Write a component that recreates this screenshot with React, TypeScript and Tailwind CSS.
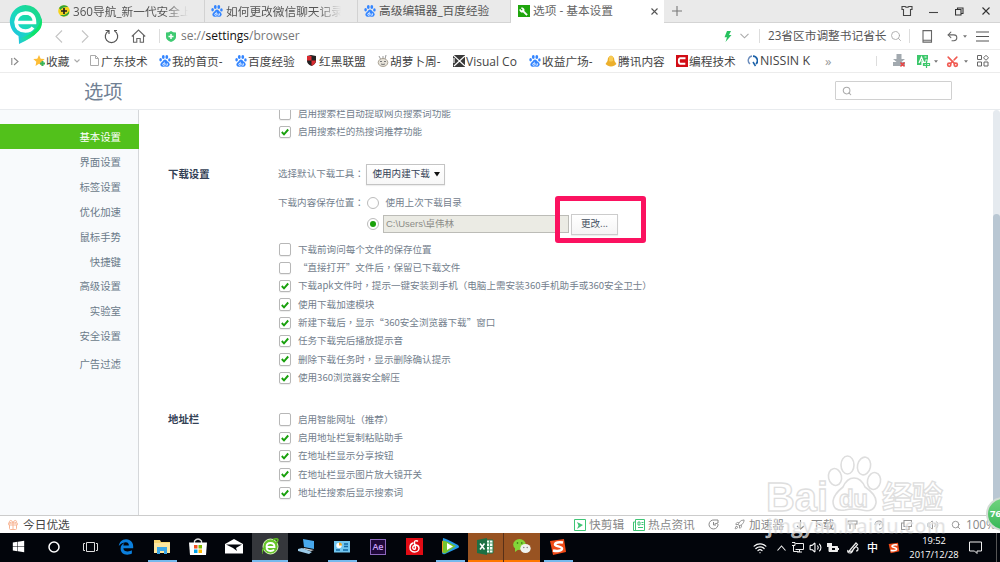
import React from "react";
import { Gift, Scissors, Search, Undo2, Wifi, Volume2, Rocket, Wrench } from "lucide-react";
import { FaEdgeLegacy, FaWindows } from "react-icons/fa6";

type Kids = { children?: React.ReactNode };

function Paw() {
  return (
    <svg width="12" height="12" viewBox="0 0 12 12" className="shrink-0" fill="#3385ff">
      <ellipse cx="4.300" cy="2" rx="1.400" ry="1.900" />
      <ellipse cx="7.800" cy="2" rx="1.400" ry="1.900" />
      <ellipse cx="1.600" cy="4.700" rx="1.300" ry="1.700" />
      <ellipse cx="10.400" cy="4.900" rx="1.300" ry="1.700" />
      <path d="M6 4.500q1.500 0 2.300 1.800Q11 8 10.700 9.800 10 12.200 7.800 11.700q-1.800-.4-3.600 0Q1.800 12.200 1.300 9.800 1.200 8 3.700 6.300 4.500 4.500 6 4.500z" />
      <path d="M5.300 6.800v3.500H4q-.8-.9 0-1.800h1.300M6.800 8.300v1.900h1.700V8.300" fill="none" stroke="#fff" strokeWidth=".7" />
    </svg>
  );
}

function Caret() {
  return <svg width="4" height="3" viewBox="0 0 4 3" className="shrink-0"><path d="M0 .3h4L2 2.7z" fill="#777" /></svg>;
}

function Chevron({ d, w = 9, h = 6, c = "#aaa" }: { d: string; w?: number; h?: number; c?: string }) {
  return <svg width={w} height={h} viewBox={`0 0 ${w} ${h}`} className="shrink-0"><path d={d} fill="none" stroke={c} strokeWidth="1.1" /></svg>;
}

function SogouIcon({ size }: { size: number }) {
  return (
    <svg width={size} height={size} viewBox="0 0 18 18">
      <path d="M1 3 15 1l2 13-13 3z" fill="#f04a17" />
      <path d="M14 4.500c-4-.8-8 0-8 2s7 1.700 7 4c0 2.500-5 3-9 2" fill="none" stroke="#fff" strokeWidth="2.500" />
    </svg>
  );
}

function Tab({ icon, children, faded }: Kids & { icon: React.ReactNode; faded?: boolean }) {
  return (
    <div className="flex h-[22px] w-[153px] shrink-0 items-center border-r border-[#d2d2d2] pl-[6px]">
      <span className="flex w-[15px] shrink-0">{icon}</span>
      <span className={faded ? "w-[115px] overflow-hidden leading-[16px] whitespace-nowrap [mask-image:linear-gradient(to_right,black_80%,transparent)]" : "whitespace-nowrap"}>{children}</span>
    </div>
  );
}

function TabBar() {
  return (
    <div className="flex h-[23px] shrink-0 items-center border-b border-[#d4d4d4] bg-[#eaeaea] pl-[52px] text-[11.700px] text-[#555]">
      <Tab faded icon={
        <svg width="12" height="12" viewBox="0 0 12 12"><circle cx="6" cy="6" r="5.800" fill="#f6d31b" /><path d="M1 3a6 6 0 0 1 9.500-.8C7 1.500 4 3 2.500 5zM11 8.500A6 6 0 0 1 2 10c3.500.5 7-.5 9-4z" fill="#2fa53a" /><path d="M6 3v6M3 6h6" stroke="#222" strokeWidth="1.700" /></svg>
      }>360导航_新一代安全上</Tab>
      <Tab faded icon={<Paw />}>如何更改微信聊天记录</Tab>
      <Tab icon={<Paw />}>高级编辑器_百度经验</Tab>
      <div className="flex h-[23px] w-[153px] shrink-0 items-center bg-white pl-[7px] text-[#666]">
        <span className="flex w-[15px] shrink-0">
          <span className="grid size-[11.500px] place-items-center bg-[#1fa60d]"><Wrench size={9} fill="white" strokeWidth={1.500} className="-scale-x-100 text-white" /></span>
        </span>
        <span className="w-[118px] whitespace-nowrap">选项 - 基本设置</span>
        <Chevron w={7} h={7} c="#555" d="M.5.500l6 6M6.500.5l-6 6" />
      </div>
      <span className="ml-[8px] flex w-[229px]"><Chevron w={10} h={10} c="#777" d="M5 0v10M0 5h10" /></span>
      <span className="flex w-[28px]"><svg width="12" height="12" viewBox="0 0 12 12"><path d="M1 1.500h3q2 1.500 4 0h3v3H9.500V10.500h-7v-6H1z" fill="none" stroke="#444" strokeWidth="1.100" /></svg></span>
      <span className="flex w-[26px]"><Chevron w={9} h={9} c="#444" d="M0 5.500h9" /></span>
      <span className="flex w-[27px]"><Chevron w={9} h={9} c="#333" d="M.5 2.500h5.500v5.500h-5.500zM2.500 2.500v-1.500h5.500v5.500h-2" /></span>
      <Chevron w={8} h={8} c="#333" d="M.5.500l7 7M7.500.5l-7 7" />
    </div>
  );
}

function NavBar() {
  return (
    <div className="flex h-[27px] shrink-0 items-center border-b border-[#ececec] pl-[55px] text-[#666]">
      <span className="flex w-[26px]"><Chevron w={8} h={13} c="#c5c5c5" d="M7 .5 1 6.500l6 6" /></span>
      <span className="flex w-[23px]"><Chevron w={8} h={13} c="#c5c5c5" d="M1 .5l6 6-6 6" /></span>
      <span className="flex w-[27px]"><svg width="15" height="15" viewBox="0 0 15 15" fill="none" stroke="#555" strokeWidth="1.200"><path d="M4.500 2A6.200 6.200 0 1 0 10.500 2M1.500 1.500h3.500v3.500M10 1.500h3" /></svg></span>
      <span className="flex w-[28px]"><svg width="15" height="14" viewBox="0 0 15 14" fill="none" stroke="#666" strokeWidth="1.100"><path d="M.8 7.500 7.500 1l6.700 6.500M2.500 6v7.300h3.300V9.500h3.400v3.800h3.300V6" /></svg></span>
      <span className="h-[14px] w-[7px] border-l border-[#ddd]" />
      <span className="flex w-[15px]">
        <svg width="10" height="11" viewBox="0 0 10 11"><path d="M0 1.500Q3 1.500 5 0 7 1.500 10 1.500V6Q10 9 5 11 0 9 0 6z" fill="#3fca72" /><path d="M5 3v5M2.500 5.500h5" stroke="#fff" strokeWidth="1.500" /></svg>
      </span>
      <span className="w-[543px] text-[12px] whitespace-nowrap text-[#777]">se://<span className="font-medium text-[#111]">settings</span>/browser</span>
      <span className="flex w-[16px]"><svg width="8" height="11" viewBox="0 0 8 11"><path d="M3 0h4L5 4h2.500L1.500 11 3 6.200H.5z" fill="#27c25f" /></svg></span>
      <span className="flex w-[19px]"><Chevron d="M.5.800 4.500 4.800 8.500.8" /></span>
      <span className="h-[14px] w-[9px] border-l border-[#ddd]" />
      <span className="w-[122px] text-[11.700px] whitespace-nowrap text-[#555]">23省区市调整书记省长</span>
      <span className="flex w-[19px]"><Search size={12} strokeWidth={1.800} className="text-[#aaa]" /></span>
      <span className="h-[14px] w-[13px] border-l border-[#ddd]" />
      <span className="flex w-[24px]"><svg width="11" height="13" viewBox="0 0 11 13"><path d="M1 .600h8.500v11.500H1zM1 10.300h8.500" fill="none" stroke="#666" strokeWidth="1.100" /></svg></span>
      <span className="flex w-[17px]"><Undo2 size={13} strokeWidth={1.900} /></span>
      <span className="flex w-[13px]"><Caret /></span>
      <svg width="13" height="11" viewBox="0 0 13 11"><path d="M0 1h13M0 5.500h13M0 10h13" stroke="#555" strokeWidth="1.200" /></svg>
    </div>
  );
}

function Mark({ icon, children, w }: Kids & { icon: React.ReactNode; w: string }) {
  return <div className={`flex shrink-0 items-center whitespace-nowrap ${w}`}><span className="flex w-[13px] shrink-0">{icon}</span><span className="pt-px">{children}</span></div>;
}

function Bookmarks() {
  return (
    <div className="flex h-[23px] shrink-0 items-center border-b border-[#ececec] pl-[11px] text-[11.700px] text-[#444]">
      <span className="flex w-[22px]"><Chevron w={8} h={9} c="#888" d="M.8 1v7M3 1l4 3.500L3 8" /></span>
      <Mark w="w-[41px]" icon={<svg width="13" height="12" viewBox="0 0 13 12"><path d="M6 0l1.700 3.700 4 .4-3 2.700.8 4.100L6 8.800 2.500 10.900l.8-4.100-3-2.700 4-.4z" fill="#fdbd37" /><path d="M9.500 6v5M7 8.500h5" stroke="#36b45c" strokeWidth="2" /></svg>}>收藏</Mark>
      <span className="flex w-[16px]"><Chevron w={6} h={4} d="M.5.500 3 3 5.500.5" /></span>
      <Mark w="w-[69px]" icon={<svg width="9" height="11" viewBox="0 0 9 11"><path d="M.5.500h5l3 3v7h-8zM5.500.5v3h3" fill="none" stroke="#aaa" /></svg>}><span className="-ml-[2px]">广东技术</span></Mark>
      <Mark w="w-[76px]" icon={<Paw />}>我的首页-</Mark>
      <Mark w="w-[71px]" icon={<Paw />}>百度经验</Mark>
      <Mark w="w-[71px]" icon={<svg width="11" height="11" viewBox="0 0 11 11"><path d="M1 1l4-1 5 1v5q0 3-4.500 5Q1 9 1 6z" fill="#222" /><path d="M1 1h4.500v4.500H1zM5.500 5.500H10Q9.500 9 5.500 11z" fill="#d92b30" /></svg>}>红黑联盟</Mark>
      <Mark w="w-[76px]" icon={<svg width="12" height="12" viewBox="0 0 12 12"><path d="M2 1l1.500 3M9 0 8 4M6 4V1" stroke="#999" /><ellipse cx="6" cy="7.500" rx="4.800" ry="4" fill="#e6e2d9" stroke="#999080" strokeWidth=".8" /><path d="M3 6.500h2M7 6.500h2M4 9q2 1 4 0" fill="none" stroke="#777" /></svg>}>胡萝卜周-</Mark>
      <Mark w="w-[76px]" icon={<svg width="12" height="12" viewBox="0 0 12 12"><rect width="12" height="12" fill="#3a3a3a" /><path d="M0 0 12 11M12 1 1 11M1 3v5" stroke="#fff" strokeWidth="1.200" /></svg>}><span className="text-[12px]">Visual Co</span></Mark>
      <Mark w="w-[76px]" icon={<Paw />}>收益广场-</Mark>
      <Mark w="w-[71px]" icon={<svg width="12" height="12" viewBox="0 0 12 12"><path d="M3 3q3-5 6 0l.5 3 2 3-2 1.500Q6 12.500 2.500 10.500L.5 9l2-3z" fill="#ecaf2c" /><path d="M4 2q2-2 4 0v4q-3 1-4 0z" fill="#f8cc55" /></svg>}>腾讯内容</Mark>
      <Mark w="w-[71px]" icon={<svg width="12" height="12" viewBox="0 0 12 12"><rect width="12" height="12" fill="#d20c15" /><path d="M9.500 3.300H4.300q-1.500 0-1.500 2.700t1.500 2.700h5" fill="none" stroke="#fff" strokeWidth="1.900" /></svg>}>编程技术</Mark>
      <Mark w="w-[76px]" icon={<svg width="11" height="12" viewBox="0 0 11 12"><path d="M9 9A4.500 4.500 0 0 0 6 1.200" fill="none" stroke="#1960a8" strokeWidth="1.700" /><path d="M5 1A4.500 4.500 0 0 0 3 9" fill="none" stroke="#6c8dbd" strokeWidth="1.400" /><path d="M6 7l2.500 4" stroke="#1960a8" strokeWidth="1.500" /></svg>}><span className="text-[12.400px]">NISSIN K</span></Mark>
      <span className="flex w-[53px] pl-[2px]"><span className="text-[13px] text-[#999]">»</span></span>
      <span className="h-[10px] w-[16px] border-l border-[#ddd]" />
      <span className="flex w-[25px]"><svg width="14" height="14" viewBox="0 0 14 14"><path d="M4.500 0h5v5H13L7 10 1 5h3.500z" fill="#a2a9af" /><path d="M1 8h12v4H1z" fill="#a2a9af" /><path d="M8.500 8.500l4 4m0-4-4 4" stroke="#ef3f3f" strokeWidth="1.400" /></svg></span>
      <span className="flex w-[17px]"><svg width="14" height="13" viewBox="0 0 14 13"><path d="M0 0h11v10H0z" fill="#3cc76b" /><path d="M2 8 4.500 2 7 8M3 6h3M7.500 2h2" fill="none" stroke="#fff" strokeWidth="1.200" /><path d="M9.500 4.500V13M5.500 7.800h7.500v3H5.500z" fill="none" stroke="#fff" strokeWidth="2.200" /><path d="M9.500 5.500V13M6.500 8.500h6v2h-6z" fill="none" stroke="#3cc76b" strokeWidth="1.200" /></svg></span>
      <span className="flex w-[12px]"><Caret /></span>
      <span className="flex w-[18px]"><Scissors size={13} strokeWidth={3} className="-rotate-90 text-[#f05a52]" /></span>
      <span className="flex w-[13px]"><Caret /></span>
      <svg width="12" height="12" viewBox="0 0 12 12" fill="none" stroke="#666"><path d="M.5.500h4v4h-4zM.5 7h4v4h-4zM7 7h4v4H7zM9 .3l2.500 2.500L9 5.300 6.500 2.800z" /></svg>
    </div>
  );
}

/* Full-width commas and colons sit centred in their cell. */
function Label({ text }: { text: string }) {
  return <span>{text.split(/([，：（）])/).map((part, i) => (i % 2 ? <span key={i} className="font-['Noto_Sans_CJK_TC',sans-serif]">{part}</span> : part))}</span>;
}

function Check({ on, children }: { on?: boolean; children: string }) {
  return (
    <div className="flex h-[18.300px] shrink-0 items-center whitespace-nowrap">
      <span className="mr-[7px] ml-[.6px] grid size-[12.400px] place-items-center rounded-[2px] border border-[#b7b7b7] bg-white shadow-[0_1px_1px_#eee]">
        {on && <svg width="8" height="8" viewBox="0 0 8 8"><path d="M.8 4 3 6.300 7.200 1.500" fill="none" stroke="#18a00c" strokeWidth="1.900" /></svg>}
      </span>
      <Label text={children} />
    </div>
  );
}

function Radio({ on }: { on?: boolean }) {
  return <span className="grid size-[12px] shrink-0 place-items-center rounded-full border border-[#bbb] bg-white">{on && <span className="size-[6px] rounded-full bg-[#1aa10b]" />}</span>;
}

const section = "w-[110px] shrink-0 text-[10.400px] font-bold text-[#334155]";

function Content() {
  return (
    <main className="relative flex grow flex-col overflow-hidden pl-[29px] font-['Noto_Sans_CJK_SC',sans-serif] text-[9.550px] text-[#73808d]">
      <div className="-mt-[5.600px] flex shrink-0 flex-col pl-[110px]">
        <Check>启用搜索栏自动提取网页搜索词功能</Check>
        <Check on>启用搜索栏的热搜词推荐功能</Check>
      </div>
      <div className="mt-[22px] flex h-[22px] shrink-0 items-center">
        <div className={section}>下载设置</div>
        <span className="w-[88px]"><Label text="选择默认下载工具：" /></span>
        <div className="flex h-[21px] w-[79px] items-center justify-between border border-[#c4c4c4] bg-gradient-to-b from-white to-[#f7f7f7] pr-[4px] pl-[5.500px] text-[#334155] shadow-[0_1px_1px_#eee]">
          使用内建下载
          <svg width="6" height="5" viewBox="0 0 6 5"><path d="M0 0h6L3 4.500z" fill="#111" /></svg>
        </div>
      </div>
      <div className="mt-[9px] flex h-[18px] shrink-0 items-center pl-[110px]">
        <span className="w-[88.500px]"><Label text="下载内容保存位置：" /></span><Radio /><span className="ml-[7px]">使用上次下载目录</span>
      </div>
      <div className="flex h-[24px] shrink-0 items-center pl-[198.500px]">
        <Radio on />
        <div className="ml-[4.500px] flex h-[18px] w-[186px] items-center border border-[#bcbcb7] bg-[#ebebe4] pl-[2px] text-[9.500px] text-[#8c8c88]"><span className="font-['Liberation_Sans','Noto_Sans_CJK_SC',sans-serif] whitespace-nowrap">C:\Users\卓伟林</span></div>
        <div className="ml-[2px] flex h-[21px] w-[47px] items-center justify-center border border-[#ccc] bg-gradient-to-b from-white to-[#f5f5f5] text-[#445060] shadow-[0_1px_1px_#eee]">更改...</div>
      </div>
      <div className="mt-[4.500px] flex shrink-0 flex-col pl-[110px]">
        <Check>下载前询问每个文件的保存位置</Check>
        <Check>“直接打开”文件后，保留已下载文件</Check>
        <Check on>下载apk文件时，提示一键安装到手机（电脑上需安装360手机助手或360安全卫士）</Check>
        <Check on>使用下载加速模块</Check>
        <Check on>新建下载后，显示“360安全浏览器下载”窗口</Check>
        <Check on>任务下载完后播放提示音</Check>
        <Check on>删除下载任务时，显示删除确认提示</Check>
        <Check on>使用360浏览器安全解压</Check>
      </div>
      <div className="mt-[23.500px] flex shrink-0">
        <div className={`${section} leading-[18px]`}>地址栏</div>
        <div className="flex flex-col">
          <Check>启用智能网址（推荐）</Check>
          <Check on>启用地址栏复制粘贴助手</Check>
          <Check on>在地址栏显示分享按钮</Check>
          <Check on>在地址栏显示图片放大镜开关</Check>
          <Check on>地址栏搜索后显示搜索词</Check>
        </div>
      </div>
      <div className="absolute top-[86px] left-[416px] h-[47px] w-[91px] rounded-[3px] border-[5.500px] border-[#fb1260]" />
    </main>
  );
}

const menu = ["界面设置", "标签设置", "优化加速", "鼠标手势", "快捷键", "高级设置", "实验室", "安全设置"];

function Sidebar() {
  return (
    <nav className="flex w-[139px] shrink-0 flex-col border-r border-[#d5d7da] bg-[#f8fafc] pt-[14px] text-right text-[10.400px] leading-[25px] text-[#6b7a8a]">
      <div className="-mr-px mb-[1px] h-[25px] bg-[#52c11b] pr-[18px] leading-[27px] text-white">基本设置</div>
      {menu.map((m) => <div key={m} className="h-[24.900px] pr-[17px]">{m}</div>)}
      <div className="mt-[3px] pr-[17px]">广告过滤</div>
    </nav>
  );
}

function StatusBar() {
  return (
    <div className="flex h-[18px] shrink-0 items-center overflow-hidden border-t border-[#ccc] pl-[7px] text-[11.700px] whitespace-nowrap text-[#888]">
      <span className="flex w-[16px] shrink-0"><Gift size={12} strokeWidth={2} className="text-[#f8b594]" /></span>
      <span className="w-[551px] shrink-0 text-[#444]">今日优选</span>
      <span className="flex w-[15px] shrink-0"><svg width="12" height="12" viewBox="0 0 12 12"><path d="M.5.500h11v11H.5z" fill="none" stroke="#3fc575" /><path d="M3 3l6 3-6 4 1.500-3.500z" fill="#3fc575" /></svg></span>
      <span className="w-[44px] shrink-0">快剪辑</span>
      <span className="flex w-[15px] shrink-0"><svg width="12" height="12" viewBox="0 0 12 12" fill="none" stroke="#3fc575"><path d="M2.500.500h9v11h-11V3h2zM2.500 3v8M5 3h2v3H5zM8.500 3.500h2M8.500 5.500h2M5 8.500h5" /></svg></span>
      <span className="w-[60px] shrink-0">热点资讯</span>
      <span className="flex w-[26px] shrink-0"><svg width="11" height="11" viewBox="0 0 11 11" fill="none" stroke="#888"><path d="M6 1A4.500 4.500 0 1 0 10 5M5.500 3v3H8M6 1h4v3L6.500 5" /></svg></span>
      <span className="flex w-[15px] shrink-0"><Rocket size={11} strokeWidth={1.800} /></span>
      <span className="w-[47px] shrink-0">加速器</span>
      <span className="flex w-[15px] shrink-0"><Chevron w={9} h={10} c="#888" d="M4.500 0v9M1 6l3.500 3L8 6" /></span>
      <span className="w-[36px] shrink-0">下载</span>
      <span className="flex w-[27px] shrink-0"><Chevron w={11} h={10} c="#999" d="M1 1h9v3H1zM3 4v5M8 4v5" /></span>
      <span className="flex w-[27px] shrink-0"><Chevron w={10} h={10} c="#999" d="M1 5a4 4 0 1 1 4 4M5 5l3-3" /></span>
      <span className="flex w-[26px] shrink-0"><Chevron w={11} h={10} c="#999" d="M3 .500h7.500v6H3zM3 3H.5v6.500h7.500V7" /></span>
      <span className="flex w-[24px] shrink-0"><Volume2 size={12} strokeWidth={1.700} /></span>
      <span className="flex w-[15px] shrink-0"><Search size={10} strokeWidth={2} /></span>
      <span>100%</span>
    </div>
  );
}

function TaskButton({ children, box = "", line = "" }: Kids & { box?: string; line?: string }) {
  return (
    <div className={`flex h-[29px] w-[36px] shrink-0 flex-col items-center ${box}`}>
      <div className="flex h-[27px] items-center">{children}</div>
      <div className={`h-[2px] ${line}`} />
    </div>
  );
}

const half = "w-[29px] bg-[#76b9ed]";

function Taskbar() {
  return (
    <div className="flex h-[29px] shrink-0 items-center bg-[#02050b] text-white">
      <TaskButton><FaWindows size={13} /></TaskButton>
      <TaskButton><svg width="13" height="13" viewBox="0 0 13 13"><circle cx="6" cy="7" r="5" fill="none" stroke="#fff" strokeWidth="1.500" /></svg></TaskButton>
      <TaskButton><svg width="15" height="10" viewBox="0 0 15 10"><path d="M3.500.500h8v9h-8zM2 1.500H.5v7H2M13 1.500h1.500v7H13" fill="none" stroke="#ddd" /></svg></TaskButton>
      <TaskButton><FaEdgeLegacy size={16} className="text-[#0b7fdc]" /></TaskButton>
      <TaskButton line={half}><svg width="16" height="14" viewBox="0 0 16 14"><path d="M0 0h6l1 2h9v11H0z" fill="#f7d774" /><path d="M0 3h16v10H0z" fill="#fce79f" /><path d="M3 7h10v7h-3v-3H6v3H3z" fill="#3ba8e8" /></svg></TaskButton>
      <TaskButton><svg width="18" height="18" viewBox="0 0 18 18"><path d="M5.500 5V3q3.500-4 7 0v2" fill="none" stroke="#ddd" strokeWidth="1.300" /><path d="M0 4.500h18L17 17H1z" fill="#fff" /><path d="M5 7h3.500v3.500H5z" fill="#f25022" /><path d="M9.500 7H13v3.500H9.500z" fill="#7fba00" /><path d="M5 11.500h3.500V15H5z" fill="#00a4ef" /><path d="M9.500 11.500H13V15H9.500z" fill="#ffb900" /></svg></TaskButton>
      <TaskButton><svg width="18" height="15" viewBox="0 0 18 15"><path d="M0 5l9-5 9 5v9.500H0z" fill="#fff" /><path d="M1 5.500h16L11 9l1 3-4-3z" fill="#02050b" /></svg></TaskButton>
      <TaskButton box="bg-[#35373c]" line="w-full bg-[#76b9ed]"><svg width="17" height="17" viewBox="0 0 17 17"><circle cx="8.500" cy="8.500" r="7.500" fill="#67c52b" stroke="#d7f4b9" strokeWidth="1" /><path d="M4.500 9h8q0-4-4-4t-4 4 4 4q2.500 0 3.500-1.500" fill="none" stroke="#fff" strokeWidth="1.800" /><path d="M0 16Q-1 13 3 9M11 1.500Q15 0 16 1.500 16 3 14 5" stroke="#5fbf22" strokeWidth="1.500" fill="none" /></svg></TaskButton>
      <TaskButton><svg width="17" height="15" viewBox="0 0 17 15"><path d="M5 0l11 2v8L6 8z" fill="#48a8ec" /><path d="M6 9l10 2-3 1-8-2z" fill="#ccc" /><path d="M0 10l4-1 10 4-3 2-11-3z" fill="#9ccbe9" /></svg></TaskButton>
      <TaskButton line={half}><svg width="16" height="12" viewBox="0 0 16 12"><path d="M0 0h16v11.500H0z" fill="#72c6ef" /><circle cx="5" cy="4.500" r="2.700" fill="#fff" /><path d="M5 1.500a3 3 0 0 1 3 3H5z" fill="#f7a71d" /><path d="M10 3h4M10 5.500h4M2 9h4M9 9h5" stroke="#126aa5" strokeWidth="1.300" /></svg></TaskButton>
      <TaskButton><span className="grid size-[16px] place-items-center border border-[#8c67bd] bg-[#1f0839] text-[9px] leading-none font-semibold text-[#c9a1f7]">Ae</span></TaskButton>
      <TaskButton><svg width="17" height="17" viewBox="0 0 17 17"><rect width="17" height="17" fill="#e20b14" /><path d="M11.500 3Q8 2 8.500 5l1 4.500q0 2-1.500 1.800-1.800-.5-1-2.800Q8 7 10 7q3 .5 3 3.500-.5 3.500-4.500 3.500-4.500-.5-4.500-4.500Q4 6 7 5" fill="none" stroke="#fff" strokeWidth="1.400" strokeLinecap="round" /></svg></TaskButton>
      <TaskButton line={half}><svg width="18" height="17" viewBox="0 0 18 17"><path d="M2 0q2 0 15 7 2 2 0 3L4 16Q1 17 1 14z" fill="#2499e8" /><path d="M1 13V4q0-2 2-1l10 5.500L3 15q-2 0-2-2z" fill="#f69623" /><path d="M2 3q1-1 13 5L4 15.500Q1 15 2 12z" fill="#75c52d" /><path d="M6 5l6 3.500L6 12z" fill="#fff" /></svg></TaskButton>
      <TaskButton box="border-r border-[#583018] bg-[#985322]" line="w-full bg-[#ff7800]"><svg width="17" height="17" viewBox="0 0 17 17"><path d="M9 2h7v13H9z" fill="#f4fff7" stroke="#1f774a" /><path d="M9 5h7M9 8.500h7M9 12h7M12.500 2v13" stroke="#4c9d70" /><path d="M0 2l10-2v17L0 15z" fill="#1d7044" /><path d="M3 5.500l4.500 6m0-6L3 11.500" stroke="#fff" strokeWidth="1.500" /></svg></TaskButton>
      <TaskButton box="bg-[#985322]" line="w-full bg-[#ff7800]"><svg width="18" height="15" viewBox="0 0 18 15"><ellipse cx="6.500" cy="5.500" rx="6.300" ry="5.400" fill="#83d638" /><path d="M2 9l0 4 4-3z" fill="#83d638" /><circle cx="4.500" cy="4" r=".8" fill="#286113" /><circle cx="8.800" cy="4" r=".8" fill="#286113" /><ellipse cx="12.500" cy="9.500" rx="5.200" ry="4.500" fill="#f0f3ef" /><circle cx="10.800" cy="8.500" r=".7" fill="#777" /><circle cx="14.200" cy="8.500" r=".7" fill="#777" /></svg></TaskButton>
      <TaskButton line={half}><SogouIcon size={18} /></TaskButton>
      <span className="ml-[177px] flex w-[24px]"><Wifi size={14} strokeWidth={2.200} /></span>
      <span className="flex w-[15px]"><Chevron w={9} h={6} c="#eee" d="M.5 5.500l4-4.500 4 4.500" /></span>
      <span className="flex w-[17px]"><svg width="12" height="11" viewBox="0 0 12 11" fill="none" stroke="#eee"><path d="M3.500 1.500h8v6h-8M0 .5h3v3H0M1.500 3.500v6h5M5 10h5M7.500 7.500V10" /></svg></span>
      <span className="flex w-[18px]"><Volume2 size={13} strokeWidth={2} /></span>
      <span className="flex w-[20px]"><svg width="12" height="10" viewBox="0 0 12 10"><path d="M2 3.500h8.500v5H2z" fill="#eee" stroke="#eee" /><path d="M0 0h5v4H0zM11 5h1v2h-1z" fill="#eee" /><path d="M5 5h3v2H5z" fill="#02050b" /></svg></span>
      <span className="flex w-[20px]"><svg width="12" height="12" viewBox="0 0 12 12" fill="none" stroke="#eee" strokeWidth="1.200"><path d="M3 8l6-7 1.500 1.500L5 9l-3 .5zM1 8q-1 3 2 3 2 0 3-3t3-3 2 2-2 2" /></svg></span>
      <span className="w-[21px] text-[11px] font-medium">中</span>
      <span className="flex w-[21px]"><SogouIcon size={12} /></span>
      <div className="w-[50px] text-center text-[9.300px] leading-[14px] whitespace-nowrap"><div>19:52</div><div>2017/12/28</div></div>
      <span className="ml-[10px] flex w-[27px]"><svg width="13" height="13" viewBox="0 0 13 13"><path d="M.5 1h12v9H8v2.500L5.500 10h-5z" fill="none" stroke="#eee" /></svg></span>
      <span className="h-[29px] w-px bg-[#555]" />
    </div>
  );
}

function Logo() {
  return (
    <svg className="absolute top-[4px] left-[8px]" width="35" height="41" viewBox="0 0 35 41">
      <defs>
        <linearGradient id="ring" x1="0" y1="1" x2="1" y2="0"><stop offset="0" stopColor="#22b8f5" /><stop offset=".45" stopColor="#19d9bd" /><stop offset="1" stopColor="#1bd979" /></linearGradient>
        <linearGradient id="tail" x1="0" y1="1" x2="1" y2="0"><stop offset="0" stopColor="#2eeb92" stopOpacity="0" /><stop offset=".5" stopColor="#0de36b" /></linearGradient>
      </defs>
      <path d="M17.500 1a16.500 16.500 0 0 1 13 26Q24 34 11 40q0-3-.5-8A16.500 16.500 0 0 1 17.500 1z" fill="url(#ring)" />
      <path d="M33.500 14q2 9-4 14-5 6-19 12l2-6q17-5 21-20z" fill="url(#tail)" />
      <path d="M8 18.500h18.500q0-9.300-9-9.500-9 .5-9.500 9 .5 9 9.500 9 5 0 7.500-3.500" fill="none" stroke="#fff" strokeWidth="3.600" />
    </svg>
  );
}

function Watermark() {
  return (
    <svg className="pointer-events-none absolute top-[450px] left-[762px]" width="190" height="92" viewBox="0 0 190 92" fill="#ffffff" fillOpacity=".75" stroke="#dedede">
      <g strokeWidth="1.600">
        <ellipse cx="85.500" cy="15" rx="6.500" ry="9" /><ellipse cx="102" cy="16" rx="6.500" ry="9" transform="rotate(12 102 16)" />
        <ellipse cx="73" cy="27" rx="6.500" ry="8.500" transform="rotate(-12 73 27)" /><ellipse cx="112" cy="31" rx="6.500" ry="8.500" transform="rotate(12 112 31)" />
        <path d="M92 28q7 0 11 9 12 8 11 16-2 10-14 7-9-2-17 0-12 2-12-9 1-7 10-14 4-9 11-9z" />
      </g>
      <g fontFamily="Liberation Sans, Noto Sans CJK SC, sans-serif" fontWeight="bold">
        <text x="4" y="61" fontSize="41" textLength="62" lengthAdjust="spacingAndGlyphs" strokeWidth="1.400">Bai</text>
        <text x="77" y="57" fontSize="24" textLength="29" strokeWidth="1.300">du</text>
        <text x="120" y="58" fontSize="31" textLength="61" strokeWidth="1.300">经验</text>
        <text x="5" y="83" fontSize="19" fontFamily="Open Sans, sans-serif" fontWeight="600" textLength="179" lengthAdjust="spacingAndGlyphs" fill="#d8d8d8" fillOpacity=".75" stroke="#fff" strokeOpacity=".55" strokeWidth=".7">jingyan.baidu.com</text>
      </g>
    </svg>
  );
}

export default function App() {
  return (
    <div className="relative flex h-[562px] w-[1000px] flex-col overflow-hidden bg-white font-['Open_Sans','Noto_Sans_CJK_SC',sans-serif] leading-none">
      <TabBar />
      <NavBar />
      <Bookmarks />
      <header className="flex h-[37px] shrink-0 items-center justify-between border-b border-[#e8ebee] pr-[48px] pl-[84px]">
        <h1 className="pt-[2px] text-[19.300px] text-[#718194]">选项</h1>
        <div className="mb-[1px] flex h-[19px] w-[117px] items-center rounded-[1px] border border-[#d0d0d0] pl-[6px]"><Search size={10} strokeWidth={2.500} className="text-[#aaa]" /></div>
      </header>
      <div className="flex h-[405px] shrink-0">
        <Sidebar />
        <Content />
        <div className="w-[7px] shrink-0 rounded-t-full bg-[#e5eaef] pt-[104px]"><div className="h-[301px] rounded-t-full bg-[#b9c7d3]" /></div>
      </div>
      <StatusBar />
      <Taskbar />
      <Logo />
      <Watermark />
      <div className="absolute top-[497px] left-[986px] flex size-[34px] items-center rounded-full border-[2px] border-[#d3dcd5] bg-gradient-to-b from-[#70d37e] to-[#35b858] pl-[2px] text-[9.500px] font-bold text-white">76%</div>
    </div>
  );
}
